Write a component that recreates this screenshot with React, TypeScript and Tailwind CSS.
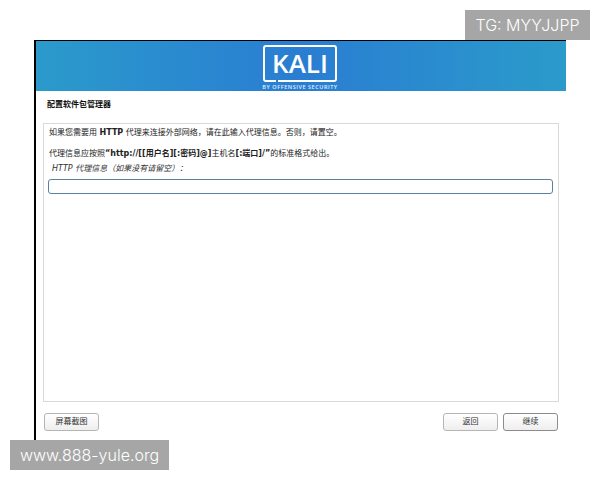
const cjk = "font-['DejaVu_Sans','Noto_Sans_CJK_SC',sans-serif]";

function Btn({ label, dark }: { label: string; dark?: boolean }) {
  return (
    <button
      className={`w-[55px] h-[18px] rounded-[3px] border bg-gradient-to-b from-white to-[#eeeeee] text-[8px] text-[#333] flex items-center justify-center ${
        dark ? "border-[#8c8c8c]" : "border-[#b5b5b5]"
      }`}
    >
      {label}
    </button>
  );
}

function KaliLogo() {
  return (
    <div className="flex flex-col items-center w-[76px]">
      <div className="relative w-[74px] h-[37px] border-[2px] border-white rounded-[3px] flex items-center justify-center">
        <span className="font-['Open_Sans',sans-serif] text-[26px] font-semibold leading-none text-white">KALI</span>
        <span className="absolute -bottom-[2px] left-[11px] w-[2px] h-[2px] bg-[#2a80d0]" />
      </div>
      <span className="font-['Open_Sans',sans-serif] text-[5.5px] leading-none mt-[3px] text-[#e3f0fa] tracking-[0.55px] whitespace-nowrap font-semibold">
        BY OFFENSIVE SECURITY
      </span>
    </div>
  );
}

export default function App() {
  return (
    <div className={`relative w-[600px] h-[480px] bg-white overflow-hidden pt-[40px] pl-[34px] ${cjk}`}>
      <div className="w-[532px] h-[400px] border-t-[1px] border-l-[2px] border-black flex flex-col">
        <div className="h-[50px] bg-gradient-to-r from-[#2b9acb] via-[#2a7dd2] to-[#2b9bca] flex items-center justify-center pr-[2px] pt-[3px]">
          <KaliLogo />
        </div>
        <h1 className="mt-[9px] ml-[11px] text-[8px] leading-[10px] font-bold text-[#111]">配置软件包管理器</h1>
        <div className="mt-[13px] ml-[7px] w-[516px] h-[279px] border border-[#d9d9d9] px-[5px] pt-[4px]">
          <p className="text-[8px] leading-[10px] text-[#222]">
            如果您需要用 <b className="font-bold">HTTP</b> 代理来连接外部网络，请在此输入代理信息。否则，请置空。
          </p>
          <p className="mt-[11px] text-[8px] leading-[10px] text-[#222]">
            代理信息应按照<b className="font-bold">“http://[[用户名][:密码]@]</b>主机名<b className="font-bold">[:端口]/”</b>的标准格式给出。
          </p>
          <p className="mt-[5px] ml-[3px] text-[8px] leading-[10px] italic text-[#333]">HTTP 代理信息（如果没有请留空）：</p>
          <div className="mt-[5px] -ml-[1px] w-[505px] h-[15px] rounded-[3px] border border-[#5d7e9f] bg-white" />
        </div>
        <div className="mt-[11px] ml-[8px] w-[514px] flex items-center">
          <Btn label="屏幕截图" />
          <div className="ml-auto flex gap-[5px]">
            <Btn label="返回" />
            <Btn label="继续" dark />
          </div>
        </div>
      </div>
      <div className="absolute left-[465px] top-[10px] w-[125px] h-[30px] bg-[#a6a6a6] flex items-center justify-center text-white text-[16px] font-['Inter',sans-serif] font-light">
        TG: MYYJJPP
      </div>
      <div className="absolute left-[10px] top-[440px] w-[159px] h-[30px] bg-[#a6a6a6] flex items-center justify-center text-white text-[16px] font-['Inter',sans-serif] font-light">
        www.888-yule.org
      </div>
    </div>
  );
}
